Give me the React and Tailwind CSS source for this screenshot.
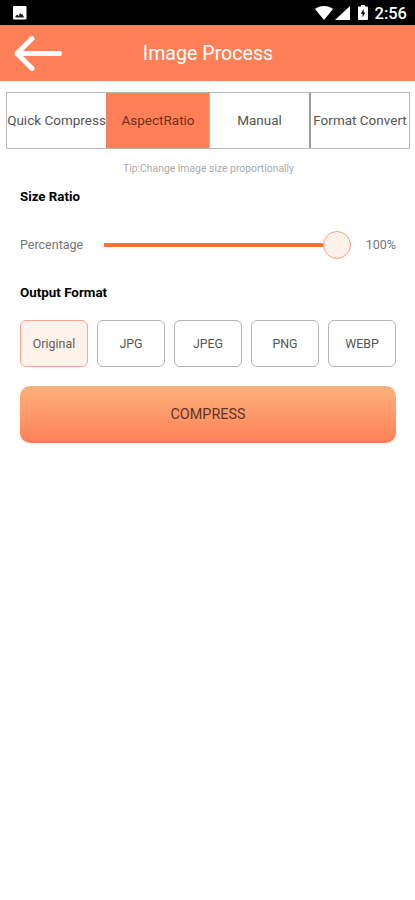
import { useState } from "react";
import clsx from "clsx";

const tabs = [
    { name: "Quick Compress", size: "w-[99px]" },
    { name: "AspectRatio", size: "w-[103px] border-l border-[#e08468]" },
    { name: "Manual", size: "w-[100px] border-l border-[#b9b9b9]" },
    { name: "Format Convert", size: "w-[100px] border-l-2 border-[#9c9c9c]" },
];

const formats = ["Original", "JPG", "JPEG", "PNG", "WEBP"];

const StatusBar = () => (
    <div className="h-[25px] bg-black text-white flex items-center justify-between pl-[13px] pr-[8px]">
        <svg width="14" height="14" viewBox="0 0 14 14" className="mt-[1px]">
            <rect width="13.5" height="13.5" rx="1.2" fill="#fff" />
            <path d="M2.500 11.500V10l1.700-1.500 1.300 1.500 1.700-3 1 1.500 1-.700 2 3.700z" fill="#222" />
        </svg>
        <div className="flex items-center">
            <svg width="18" height="14" viewBox="0 0 18 14" fill="#fff" className="mr-[2px]">
                <path d="M9 14L0 3C4.500-.900 13.500-.900 18 3z" />
            </svg>
            <svg width="15" height="14" viewBox="0 0 15 14" fill="#fff" className="mr-[8px]">
                <path d="M15 0v14H0z" />
            </svg>
            <svg width="10" height="15" viewBox="0 0 10 15" className="mr-[7px]">
                <path d="M3 0h4v1.500h2q1 0 1 1V14q0 1-1 1H1q-1 0-1-1V2.500q0-1 1-1h2z" fill="#fff" />
                <path d="M5.700 4L2.800 8.700h1.800v3.600L7.300 7.500H5.700z" fill="#000" />
            </svg>
            <span className="text-[16.5px] leading-none font-medium mt-[3px]">2:56</span>
        </div>
    </div>
);

const Header = () => (
    <header className="h-14 bg-[#ff7f58] text-white grid grid-cols-[72px_1fr_72px] items-center">
        <button className="pl-[14px]" aria-label="Back">
            <svg width="49" height="35" viewBox="0 0 49 35" fill="none" stroke="#fff" strokeWidth="5" strokeLinecap="round" strokeLinejoin="round">
                <path d="M18 2.500L3 17.500l15 15M3 17.500h42.500" />
            </svg>
        </button>
        <h1 className="pt-[2px] pl-px text-center text-[19.6px] leading-none whitespace-nowrap">Image Process</h1>
    </header>
);

export default function App() {
    const [tab, setTab] = useState("AspectRatio");
    const [format, setFormat] = useState("Original");

    return (
        <div className="w-[415px] h-[900px] bg-white overflow-hidden font-[Roboto,sans-serif]">
            <StatusBar />
            <Header />

            <nav className="mt-[11px] ml-[6px] w-[404px] h-[57px] flex border border-[#b9b9b9]">
                {tabs.map(({ name, size }) => (
                    <button
                        key={name}
                        onClick={() => setTab(name)}
                        className={clsx(
                            "shrink-0 flex items-center justify-center whitespace-nowrap text-[13.5px] pb-px",
                            size,
                            tab === name ? "bg-[#ff7f58] text-[#6b3324]" : "text-[#555]"
                        )}
                    >
                        {name}
                    </button>
                ))}
            </nav>

            <p className="mt-[13px] pl-[2px] h-[14px] text-center text-[10.4px] leading-[14px] text-[#aaa]">
                Tip:Change image size proportionally
            </p>

            <main className="pl-5 pr-[19px]">
                <h2 className="mt-[13px] h-4 text-[13.3px] leading-4 font-bold text-black">Size Ratio</h2>

                <div className="mt-[26px] h-7 flex items-center text-[#757575]">
                    <span className="w-[84px] pt-px text-[12.5px]">Percentage</span>
                    <div className="flex items-center">
                        <div className="w-[219px] h-1 bg-[#fc7039]" />
                        <div className="w-7 h-7 rounded-full border border-[#fb9c83] bg-[#fff2ea]" />
                    </div>
                    <span className="ml-auto pt-px text-[12.5px]">100%</span>
                </div>

                <h2 className="mt-[26px] h-4 text-[13.4px] leading-4 font-bold text-black">Output Format</h2>

                <div className="mt-[19px] flex justify-between">
                    {formats.map((f) => (
                        <button
                            key={f}
                            onClick={() => setFormat(f)}
                            className={clsx(
                                "w-[68px] h-[47px] pt-[2px] rounded-[6px] border text-[12.4px]",
                                format === f
                                    ? "border-[#ffa58c] bg-[#fff2eb] text-[#665a55]"
                                    : "border-[#b5b5b5] bg-white text-[#555]"
                            )}
                        >
                            {f}
                        </button>
                    ))}
                </div>

                <button className="mt-[19px] w-full h-[57px] rounded-[10px] bg-linear-to-b from-[#fcb17c] to-[#ff7f59] text-[14.4px] text-[#5f3526]">
                    COMPRESS
                </button>
            </main>
        </div>
    );
}
